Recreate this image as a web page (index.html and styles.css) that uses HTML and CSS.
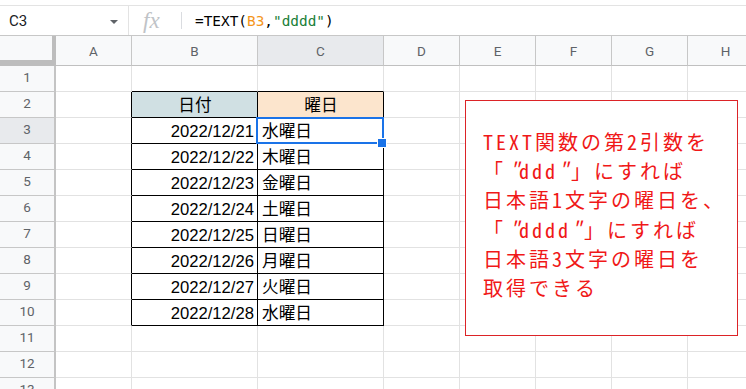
FILE: index.html
```html
<!DOCTYPE html>
<html lang="ja">
<head>
<meta charset="utf-8">
<link rel="stylesheet" href="styles.css">
</head>
<body>
<div class="fbar">
  <div class="namebox"><span class="ref">C3</span><span class="caret"></span></div>
  <div class="fx"><span>fx</span></div>
  <div class="sep"></div>
  <div class="formula">=TEXT(<span class="o">B3</span>,<span class="g">"dddd"</span>)</div>
</div>
<div class="grid">
  <div class="corner"></div>
  <div class="ch">A</div><div class="ch">B</div><div class="ch sel">C</div><div class="ch">D</div><div class="ch">E</div><div class="ch">F</div><div class="ch">G</div><div class="ch">H</div>

  <div class="rh">1</div>
  <div class="c"></div><div class="c kb"></div><div class="c kb"></div><div class="c"></div><div class="c"></div><div class="c"></div><div class="c"></div><div class="c"></div>

  <div class="rh">2</div>
  <div class="c kr"></div><div class="c k v m hb">日付</div><div class="c k v m ho">曜日</div><div class="c"></div><div class="c"></div><div class="c"></div><div class="c"></div><div class="c"></div>

  <div class="rh sel">3</div>
  <div class="c kr"></div><div class="c k v r">2022/12/21</div><div class="c k v">水曜日</div><div class="c"></div><div class="c"></div><div class="c"></div><div class="c"></div><div class="c"></div>

  <div class="rh">4</div>
  <div class="c kr"></div><div class="c k v r">2022/12/22</div><div class="c k v">木曜日</div><div class="c"></div><div class="c"></div><div class="c"></div><div class="c"></div><div class="c"></div>

  <div class="rh">5</div>
  <div class="c kr"></div><div class="c k v r">2022/12/23</div><div class="c k v">金曜日</div><div class="c"></div><div class="c"></div><div class="c"></div><div class="c"></div><div class="c"></div>

  <div class="rh">6</div>
  <div class="c kr"></div><div class="c k v r">2022/12/24</div><div class="c k v">土曜日</div><div class="c"></div><div class="c"></div><div class="c"></div><div class="c"></div><div class="c"></div>

  <div class="rh">7</div>
  <div class="c kr"></div><div class="c k v r">2022/12/25</div><div class="c k v">日曜日</div><div class="c"></div><div class="c"></div><div class="c"></div><div class="c"></div><div class="c"></div>

  <div class="rh">8</div>
  <div class="c kr"></div><div class="c k v r">2022/12/26</div><div class="c k v">月曜日</div><div class="c"></div><div class="c"></div><div class="c"></div><div class="c"></div><div class="c"></div>

  <div class="rh">9</div>
  <div class="c kr"></div><div class="c k v r">2022/12/27</div><div class="c k v">火曜日</div><div class="c"></div><div class="c"></div><div class="c"></div><div class="c"></div><div class="c"></div>

  <div class="rh">10</div>
  <div class="c kr"></div><div class="c k v r">2022/12/28</div><div class="c k v">水曜日</div><div class="c"></div><div class="c"></div><div class="c"></div><div class="c"></div><div class="c"></div>

  <div class="rh">11</div>
  <div class="c"></div><div class="c"></div><div class="c"></div><div class="c"></div><div class="c"></div><div class="c"></div><div class="c"></div><div class="c"></div>

  <div class="rh">12</div>
  <div class="c"></div><div class="c"></div><div class="c"></div><div class="c"></div><div class="c"></div><div class="c"></div><div class="c"></div><div class="c"></div>

  <div class="rh">13</div>
  <div class="c"></div><div class="c"></div><div class="c"></div><div class="c"></div><div class="c"></div><div class="c"></div><div class="c"></div><div class="c"></div>
</div>

<div class="selection"></div>
<div class="handle"></div>

<div class="note">TEXT関数の第2引数を<br>「<span class="q qo">"</span>ddd<span class="q">"</span>」にすれば<br>日本語1文字の曜日を、<br>「<span class="q qo">"</span>dddd<span class="q">"</span>」にすれば<br>日本語3文字の曜日を<br>取得できる</div>
</body>
</html>
```

FILE: styles.css
```css
* { box-sizing: border-box; }
html, body { margin: 0; padding: 0; }
body {
  width: 746px;
  height: 389px;
  overflow: hidden;
  position: relative;
  background: #fff;
  font-family: "Liberation Sans", "Noto Sans CJK JP", sans-serif;
  color: #000;
}

/* formula bar */
.fbar {
  margin-top: 5px;
  height: 31px;
  border-top: 1px solid #e3e3e3;
  border-bottom: 1px solid #c7c7c7;
  display: flex;
  align-items: stretch;
}
.namebox {
  width: 129px;
  border-right: 1px solid #e3e3e3;
  display: flex;
  align-items: center;
  justify-content: space-between;
  padding: 0 10px 0 9px;
}
.ref {
  font-family: Roboto, "Liberation Sans", sans-serif;
  font-size: 15px;
  color: #202124;
}
.caret {
  width: 0;
  height: 0;
  margin-top: 3px;
  border-left: 4.5px solid transparent;
  border-right: 4.5px solid transparent;
  border-top: 4.5px solid #5f6368;
}
.fx {
  width: 52px;
  padding-left: 14px;
  display: flex;
  align-items: center;
  font-family: "Liberation Serif", serif;
  font-style: italic;
  font-size: 23px;
  color: #c0c3c7;
}
.sep {
  width: 1px;
  margin: 6px 0;
  background: #dadce0;
}
.formula {
  padding-left: 13px;
  display: flex;
  align-items: center;
  font-family: "DejaVu Sans Mono", monospace;
  font-size: 14.4px;
  white-space: pre;
  color: #000;
}
.o { color: #f4961c; }
.g { color: #188038; }

/* grid */
.grid {
  display: grid;
  grid-template-columns: 56px 76px 126px 126px 76px 76px 76px 76px 76px;
  grid-template-rows: 30px repeat(13, 26px);
}
.corner {
  background: #f8f9fa;
  border-right: 4px solid #bdbdbd;
  border-bottom: 6px solid #bdbdbd;
}
.ch, .rh {
  background: #f8f9fa;
  font-family: Roboto, "Liberation Sans", sans-serif;
  font-size: 13.5px;
  color: #5f6368;
  display: flex;
  align-items: center;
  justify-content: center;
}
.ch {
  border-right: 1px solid #c7c7c7;
  border-bottom: 1px solid #c0c0c0;
}
.rh {
  border-right: 2px solid #c4c4c4;
  border-bottom: 1px solid #c7c7c7;
  padding-bottom: 3px;
}
.sel { background: #e8eaed; }

.c {
  border-right: 1px solid #e2e2e2;
  border-bottom: 1px solid #e2e2e2;
}
.k { border-right-color: #000; border-bottom-color: #000; }
.kr { border-right-color: #000; }
.kb { border-bottom-color: #000; }
.hb { background: #d0e0e3; }
.ho { background: #fce5cd; }

.v {
  display: flex;
  align-items: flex-end;
  padding: 0 3px 2px 4px;
  font-size: 16.67px;
  line-height: 19px;
  white-space: nowrap;
  overflow: hidden;
}
.r { justify-content: flex-end; }
.m { justify-content: center; }

/* selection overlay */
.selection {
  position: absolute;
  left: 256px;
  top: 117px;
  width: 128px;
  height: 27px;
  border: 2px solid #1a73e8;
}
.handle {
  position: absolute;
  left: 377px;
  top: 138px;
  width: 10px;
  height: 10px;
  background: #1a73e8;
  border: 1px solid #fff;
}

/* text box drawing */
.note {
  position: absolute;
  left: 465px;
  top: 100px;
  width: 273px;
  height: 236px;
  border: 1px solid #dc2327;
  background: #fff;
  padding: 26px 0 0 17px;
  color: #f01818;
  font-family: "Noto Sans Mono CJK JP", "Noto Sans CJK JP", monospace;
  font-size: 20px;
  line-height: 29.2px;
  letter-spacing: 3px;
  white-space: nowrap;
}
.q { font-style: italic; }
.qo { padding-left: 3px; letter-spacing: 0; }
```
